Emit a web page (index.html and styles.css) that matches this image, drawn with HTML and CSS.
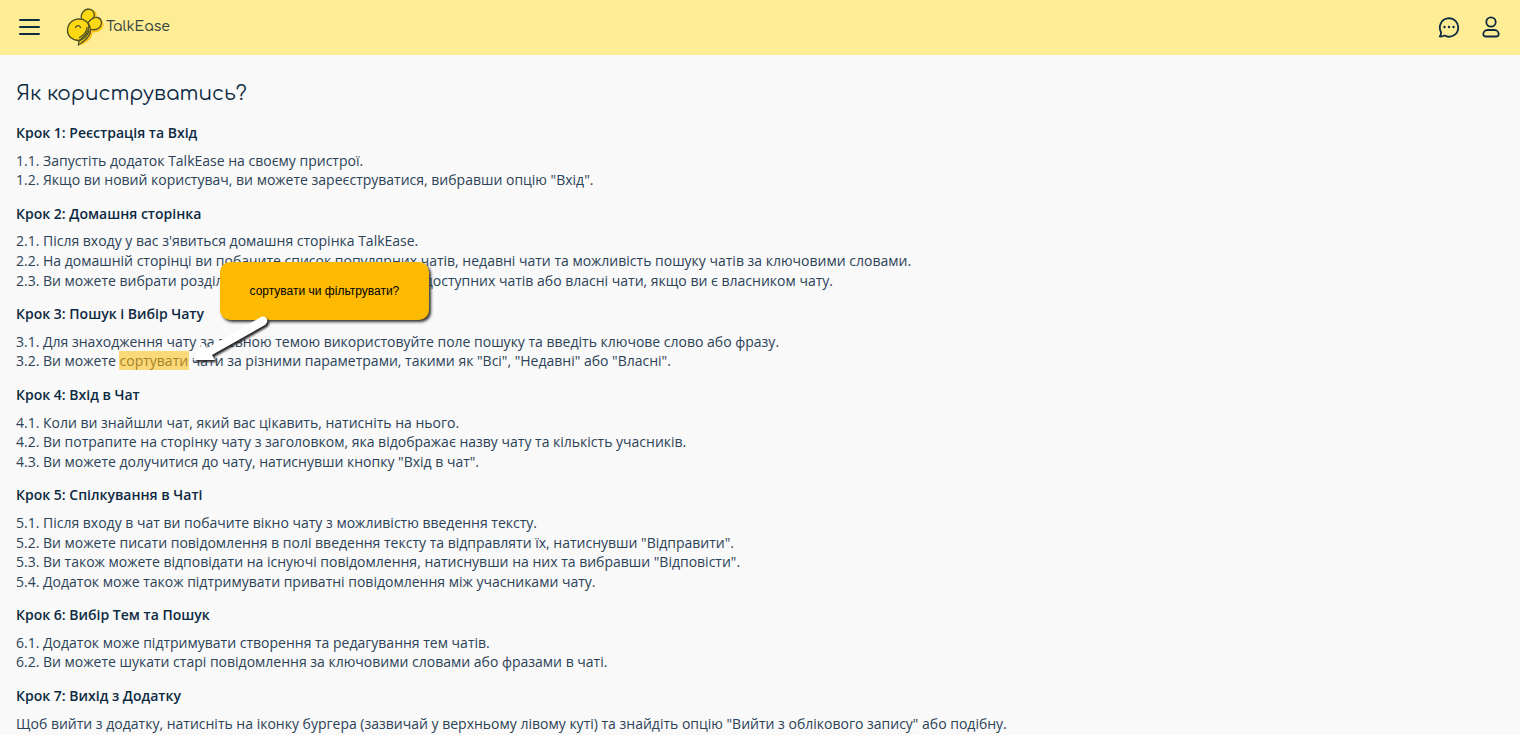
FILE: index.html
```
<!DOCTYPE html>
<html lang="uk">
<head>
<meta charset="utf-8">
<meta name="viewport" content="width=device-width, initial-scale=1">
<title>TalkEase</title>
<link rel="stylesheet" href="styles.css">
</head>
<body>
<header class="topbar">
  <button class="icon-button" type="button" aria-label="Меню">
    <svg width="22" height="18" viewBox="0 0 22 18" fill="none" stroke="currentColor" stroke-width="2" stroke-linecap="round"><path d="M2 2h19M2 9h19M2 16h19"/></svg>
  </button>
  <a class="brand" href="#">
    <svg class="brand-logo" width="40" height="40" viewBox="0 0 40 40" fill="none">
      <g transform="translate(1.500 .5)" fill="#fcc419">
        <path d="M16 14C14 8 18 3 23 2c5 0 7 4 6 8l-3 8z"/>
        <path d="M21 18c2-4 7-7 11-6 5 1 5 7 2 10-3 3-8 4-11 2z"/>
        <path d="M23 17c4 7 2 13-3 17l-7 4v-6z"/>
      </g>
      <g fill="#ffd814" stroke="#515326" stroke-width="1.300" stroke-linejoin="round" stroke-linecap="round">
        <path d="M15.500 12C14 7 18 2.500 22 2c5 0 7 4 6 7.500-1 3-4 5-6 7.500z"/>
        <path d="M22 16c2-4 6.500-6 9.500-5.500 4.500 1 5 6 2.500 9.500-3 3-7 3.500-11 1.500z"/>
        <path d="M22 16c4 6 3 12-3 17-2 2-4 3-6.500 5l.3-5z"/>
        <path d="M12.800 33.500C6 33.500 1.500 29 1.500 23.500c0-6.500 5-11.500 11.500-11.500 6 0 10.500 3.500 9.800 9-.8 5-4.500 9-10 12.500z"/>
        <path d="M21 20.500c0 4-3 7.500-7.500 10M23 24c-1.500 4.500-5 7.500-9.500 10" fill="none" stroke-width="1.400"/>
        <path d="M9.500 20.500c1-2.500 4-2.500 5 0" fill="none" stroke-width="1.400"/>
      </g>
    </svg>
    <span>TalkEase</span>
  </a>
  <nav class="actions">
    <button class="icon-button" type="button" aria-label="Чати">
      <svg width="22" height="22" viewBox="0 0 22 22" fill="none" stroke="currentColor" stroke-width="1.800" stroke-linejoin="round"><path d="M3 16A9.200 9.200 0 1 1 6.500 19.500c-1.800.9-3.500 1.200-4.800.9 1-.8 1.500-2.600 1.300-4.400z"/><g fill="currentColor" stroke="none"><circle cx="6.500" cy="11" r="1.200"/><circle cx="11" cy="11" r="1.200"/><circle cx="15.500" cy="11" r="1.200"/></g></svg>
    </button>
    <button class="icon-button" type="button" aria-label="Профіль">
      <svg width="18" height="22" viewBox="0 0 18 22" fill="none" stroke="currentColor" stroke-width="1.800"><circle cx="9" cy="6" r="4.700"/><path d="M5.500 14h7c2.500 0 4.200 2 4.200 4.300 0 1.500-1 2.200-2.700 2.200H4c-1.700 0-2.700-.7-2.700-2.200C1.300 16 3 14 5.500 14z"/></svg>
    </button>
  </nav>
</header>
<main class="guide">
  <h1>Як користруватись?</h1>
  <section>
    <h2>Крок 1: Реєстрація та Вхід</h2>
    <p>1.1. Запустіть додаток TalkEase на своєму пристрої.</p>
    <p>1.2. Якщо ви новий користувач, ви можете зареєструватися, вибравши опцію "Вхід".</p>
  </section>
  <section>
    <h2>Крок 2: Домашня сторінка</h2>
    <p>2.1. Після входу у вас з'явиться домашня сторінка TalkEase.</p>
    <p>2.2. На домашній сторінці ви побачите список популярних чатів, недавні чати та можливість пошуку чатів за ключовими словами.</p>
    <p>2.3. Ви можете вибрати розділ "Чати" для перегляду списку доступних чатів або власні чати, якщо ви є власником чату.</p>
  </section>
  <section>
    <h2>Крок 3: Пошук і Вибір Чату</h2>
    <p>3.1. Для знаходження чату за певною темою використовуйте поле пошуку та введіть ключове слово або фразу.</p>
    <p>3.2. Ви можете <span class="note-anchor"><mark>сортувати</mark><span class="note" role="note">сортувати чи фільтрувати?</span><svg class="note-arrow" width="84" height="60" viewBox="0 0 84 60"><path d="M3 50 13 33l4 5L71 7c5-2 9 4 4 8L22 45l3 5z" fill="#fff"/></svg></span> чати за різними параметрами, такими як "Всі", "Недавні" або "Власні".</p>
  </section>
  <section>
    <h2>Крок 4: Вхід в Чат</h2>
    <p>4.1. Коли ви знайшли чат, який вас цікавить, натисніть на нього.</p>
    <p>4.2. Ви потрапите на сторінку чату з заголовком, яка відображає назву чату та кількість учасників.</p>
    <p>4.3. Ви можете долучитися до чату, натиснувши кнопку "Вхід в чат".</p>
  </section>
  <section>
    <h2>Крок 5: Спілкування в Чаті</h2>
    <p>5.1. Після входу в чат ви побачите вікно чату з можливістю введення тексту.</p>
    <p>5.2. Ви можете писати повідомлення в полі введення тексту та відправляти їх, натиснувши "Відправити".</p>
    <p>5.3. Ви також можете відповідати на існуючі повідомлення, натиснувши на них та вибравши "Відповісти".</p>
    <p>5.4. Додаток може також підтримувати приватні повідомлення між учасниками чату.</p>
  </section>
  <section>
    <h2>Крок 6: Вибір Тем та Пошук</h2>
    <p>6.1. Додаток може підтримувати створення та редагування тем чатів.</p>
    <p>6.2. Ви можете шукати старі повідомлення за ключовими словами або фразами в чаті.</p>
  </section>
  <section>
    <h2>Крок 7: Вихід з Додатку</h2>
    <p>Щоб вийти з додатку, натисніть на іконку бургера (зазвичай у верхньому лівому куті) та знайдіть опцію "Вийти з облікового запису" або подібну.</p>
  </section>
</main>
</body>
</html>
```
FILE: styles.css
```
* { box-sizing: border-box; }
body {
  margin: 0;
  background: #f9f9f9;
  color: #2b4257;
  font-family: "Open Sans", "Noto Sans", sans-serif;
  font-size: 14px;
  line-height: 1.4;
}
.topbar {
  display: flex;
  align-items: center;
  padding: 7px 20px 8px 18px;
  background: #ffed96;
  color: #0d2a42;
}
.icon-button {
  display: flex;
  padding: 0;
  border: 0;
  background: none;
  color: inherit;
  cursor: pointer;
}
.brand {
  display: flex;
  align-items: center;
  margin-left: 26px;
  color: #33443f;
  font-family: Comfortaa, "Open Sans", sans-serif;
  font-size: 14px;
  font-weight: 500;
  text-decoration: none;
}
.actions {
  display: flex;
  gap: 22px;
  margin-left: auto;
}
.guide {
  display: flex;
  flex-direction: column;
  gap: 14px;
  padding: 24px 16px 0;
}
h1, h2, p { margin: 0; }
h1 {
  margin-bottom: 1px;
  color: #0d2a42;
  font-family: Comfortaa, "DejaVu Sans", sans-serif;
  font-size: 20px;
  font-weight: 400;
  line-height: 29px;
}
h2 {
  margin-bottom: 8px;
  color: #0d2a42;
  font-size: 14px;
  font-weight: 600;
}
.note-anchor { position: relative; }
mark {
  margin: 0 -1px;
  padding: 0 1px;
  background: #fcd978;
  color: #a5822a;
}
.note {
  position: absolute;
  left: 100px;
  bottom: 50px;
  padding: 21px 30px;
  border-radius: 10px;
  background: #fcba03;
  box-shadow: 2px 2px 3px #333;
  color: #000;
  font-family: "Liberation Sans", Arial, sans-serif;
  font-size: 12px;
  white-space: nowrap;
}
.note-arrow {
  position: absolute;
  left: 70px;
  bottom: 0;
  filter: drop-shadow(2px 2px 1px #222);
}
```
